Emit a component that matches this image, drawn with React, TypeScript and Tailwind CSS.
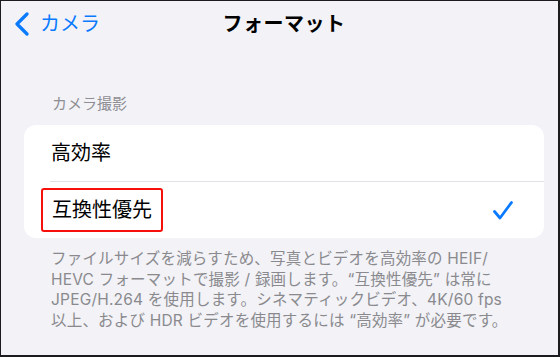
const font = { fontFamily: 'Inter, "Noto Sans CJK JP", sans-serif' };

function BackChevron() {
    return (
        <svg width="16" height="24" viewBox="0 0 16 24" fill="none" className="shrink-0">
            <path d="M13 2 L3 12 L13 22" stroke="#0a7aff" strokeWidth="3.2" strokeLinecap="round" strokeLinejoin="round" />
        </svg>
    );
}

function CheckMark() {
    return (
        <svg width="22" height="21" viewBox="0 0 22 21" fill="none" className="shrink-0">
            <path d="M2.5 11.5 L8 18 L19.5 2.5" stroke="#0a7aff" strokeWidth="2.8" strokeLinecap="round" strokeLinejoin="round" />
        </svg>
    );
}

export default function App() {
    return (
        <div
            className="w-[560px] h-[357px] bg-[#f2f2f7] border-t border-l border-r-2 border-b-2 border-[#1c1c1e] overflow-hidden flex flex-col"
            style={font}
        >
            {/* Nav bar */}
            <div className="h-[46px] shrink-0 grid grid-cols-[1fr_auto_1fr] items-center pl-[9px]">
                <div className="flex items-center gap-[10px] ml-[4px]">
                    <BackChevron />
                    <span className="text-[20px] leading-none text-[#0a7aff]">カメラ</span>
                </div>
                <h1 className="text-[20px] font-bold leading-none text-black tracking-[0.5px]">フォーマット</h1>
                <div />
            </div>

            {/* Section header */}
            <p className="mt-[47px] pl-[51px] text-[15px] leading-[20px] text-[#8e8e93]">カメラ撮影</p>

            {/* Options card */}
            <div className="mt-[11px] ml-[23px] w-[520px] bg-white rounded-[12px] flex flex-col">
                <div className="h-[56px] flex items-center pl-[27px]">
                    <span className="text-[20px] leading-none text-black">高効率</span>
                </div>
                <div className="ml-[26px] h-px bg-[#e2e2e6]" />
                <div className="h-[56px] flex items-center justify-between pl-[17px] pr-[30px]">
                    <span className="h-[44px] flex items-center px-[9px] border-2 border-[#f5100c] rounded-[3px] text-[20px] leading-none text-black">
                        互換性優先
                    </span>
                    <CheckMark />
                </div>
            </div>

            {/* Footer note */}
            <p className="mt-[11px] pl-[50px] pr-[10px] text-[15.5px] leading-[20.5px] tracking-[0.2px] text-[#8a8a8e]">
                ファイルサイズを減らすため、写真とビデオを高効率の HEIF/
                <br />
                HEVC フォーマットで撮影 / 録画します。“互換性優先” は常に
                <br />
                JPEG/H.264 を使用します。シネマティックビデオ、4K/60 fps
                <br />
                以上、および HDR ビデオを使用するには “高効率” が必要です。
            </p>
        </div>
    );
}
